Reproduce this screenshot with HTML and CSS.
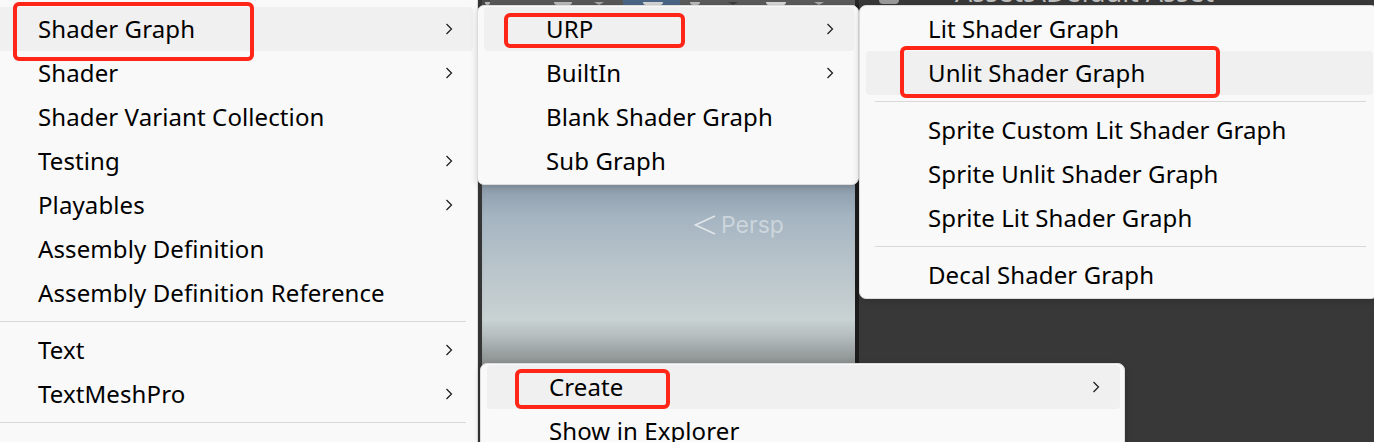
FILE: index.html
```html
<!DOCTYPE html>
<html>
<head>
<meta charset="utf-8">
<link rel="stylesheet" href="styles.css">
</head>
<body>
<div class="screen">
  <div class="app">
    <div class="toolbar">
      <div class="tb-seg tb-a"><span class="tb-bit"></span></div>
      <div class="tb-seg tb-b"><span class="tb-bit tb-v"></span><span class="tb-tri"></span></div>
      <div class="tb-seg tb-blue"><span class="tb-bit tb-wide"></span></div>
      <div class="tb-seg tb-c"><span class="tb-bit"></span><span class="tb-tri dark"></span><span class="tb-bit tb-wide"></span><span class="tb-tri"></span></div>
      <div class="tb-seg tb-edge"></div>
      <div class="tb-seg tb-dark"><span class="tb-circle"></span><span class="tb-path">Assets\Default Asset</span></div>
    </div>
    <div class="pane-left"></div>
    <div class="scene">
      <div class="persp">
        <svg width="22" height="22" viewBox="0 0 22 22"><path d="M21 2 L1.5 11 L21 20" fill="none" stroke="#eef1f3" stroke-width="1.7"/></svg>
        <span>Persp</span>
      </div>
    </div>
    <div class="scene-edge"></div>
    <div class="pane-right"></div>
  </div>

  <div class="menu menu-main">
    <div class="row hover"><span>Shader Graph</span><svg class="chev" width="8" height="12" viewBox="0 0 8 12"><path d="M1.5 1 L6.5 6 L1.5 11"/></svg></div>
    <div class="row"><span>Shader</span><svg class="chev" width="8" height="12" viewBox="0 0 8 12"><path d="M1.5 1 L6.5 6 L1.5 11"/></svg></div>
    <div class="row"><span>Shader Variant Collection</span></div>
    <div class="row"><span>Testing</span><svg class="chev" width="8" height="12" viewBox="0 0 8 12"><path d="M1.5 1 L6.5 6 L1.5 11"/></svg></div>
    <div class="row"><span>Playables</span><svg class="chev" width="8" height="12" viewBox="0 0 8 12"><path d="M1.5 1 L6.5 6 L1.5 11"/></svg></div>
    <div class="row"><span>Assembly Definition</span></div>
    <div class="row"><span>Assembly Definition Reference</span></div>
    <div class="sep"></div>
    <div class="row"><span>Text</span><svg class="chev" width="8" height="12" viewBox="0 0 8 12"><path d="M1.5 1 L6.5 6 L1.5 11"/></svg></div>
    <div class="row"><span>TextMeshPro</span><svg class="chev" width="8" height="12" viewBox="0 0 8 12"><path d="M1.5 1 L6.5 6 L1.5 11"/></svg></div>
    <div class="sep"></div>
    <div class="row"><span>Search</span></div>
  </div>

  <div class="menu menu-sub">
    <div class="row hover"><span>URP</span><svg class="chev" width="8" height="12" viewBox="0 0 8 12"><path d="M1.5 1 L6.5 6 L1.5 11"/></svg></div>
    <div class="row"><span>BuiltIn</span><svg class="chev" width="8" height="12" viewBox="0 0 8 12"><path d="M1.5 1 L6.5 6 L1.5 11"/></svg></div>
    <div class="row"><span>Blank Shader Graph</span></div>
    <div class="row"><span>Sub Graph</span></div>
  </div>

  <div class="menu menu-urp">
    <div class="row"><span>Lit Shader Graph</span></div>
    <div class="row hover"><span>Unlit Shader Graph</span></div>
    <div class="sep"></div>
    <div class="row"><span>Sprite Custom Lit Shader Graph</span></div>
    <div class="row"><span>Sprite Unlit Shader Graph</span></div>
    <div class="row"><span>Sprite Lit Shader Graph</span></div>
    <div class="sep"></div>
    <div class="row"><span>Decal Shader Graph</span></div>
  </div>

  <div class="menu menu-ctx">
    <div class="row hover"><span>Create</span><svg class="chev" width="8" height="12" viewBox="0 0 8 12"><path d="M1.5 1 L6.5 6 L1.5 11"/></svg></div>
    <div class="row"><span>Show in Explorer</span></div>
  </div>

  <div class="mark mark-shader"></div>
  <div class="mark mark-urp"></div>
  <div class="mark mark-unlit"></div>
  <div class="mark mark-create"></div>
</div>
</body>
</html>
```

FILE: styles.css
```css
* { box-sizing: border-box; }
html, body { margin: 0; padding: 0; }
body { width: 1374px; height: 442px; overflow: hidden; background: #383838; }

.screen {
  position: relative;
  width: 1374px;
  height: 442px;
  overflow: hidden;
  font-family: "Noto Sans", "Liberation Sans", sans-serif;
}

/* background editor */
.app {
  display: grid;
  grid-template-columns: 482px 373px 4px 1fr;
  grid-template-rows: 5px 1fr;
  height: 442px;
  background: #383838;
}
.toolbar {
  grid-column: 2 / 5;
  grid-row: 1;
  display: flex;
  overflow: hidden;
}
.tb-seg { height: 5px; display: flex; align-items: flex-end; overflow: hidden; }
.tb-a { width: 8px; background: #4b4b4b; padding-left: 3px; }
.tb-b { width: 133px; background: #585858; gap: 22px; padding-left: 64px; }
.tb-blue { width: 57px; background: #4a6585; padding-left: 20px; }
.tb-c { width: 175px; background: #5a5a5a; gap: 28px; padding-left: 10px; }
.tb-edge { width: 4px; background: #262626; }
.tb-dark { flex: 1; background: #383838; position: relative; padding-left: 20px; gap: 56px; }
.tb-bit { width: 10px; height: 3px; background: #b9b9b9; border-radius: 0 0 4px 4px; }
.tb-v { width: 18px; }
.tb-wide { width: 20px; background: #d6d6d6; }
.tb-tri { width: 10px; height: 3px; background: #a9a9a9; clip-path: polygon(0 0, 100% 0, 50% 100%); }
.tb-tri.dark { background: #3c3c3c; }
.tb-circle { width: 20px; height: 4px; background: #9a9a9a; border-radius: 0 0 10px 10px; align-self: flex-start; }
.tb-path {
  font-size: 27px;
  line-height: 27px;
  color: #bdbdbd;
  margin-top: -22px;
  align-self: flex-start;
  white-space: nowrap;
}
.pane-left { grid-column: 1; grid-row: 2; background: #383838; }
.scene {
  grid-column: 2;
  grid-row: 2;
  position: relative;
  background: linear-gradient(180deg,
    #7f8fa0 0%,
    #8b9aa9 50%,
    #a4b4c1 59%,
    #b7c3ca 72%,
    #c3cdd0 83%,
    #c9d3d4 88%,
    #b6bebf 92.5%,
    #8d9292 100%) 0 0 / 100% 357px no-repeat, #8d9292;
}
.scene-edge { grid-column: 3; grid-row: 2; background: #1c1c1c; }
.pane-right { grid-column: 4; grid-row: 2; background: #383838; }

.persp {
  position: absolute;
  left: 212px;
  top: 206px;
  display: flex;
  align-items: center;
  gap: 5px;
  color: rgba(236, 240, 243, 0.55);
  font-family: "Inter", "Noto Sans", sans-serif;
  font-size: 23px;
  line-height: 28px;
}
.persp svg { opacity: 0.8; }

/* menus */
.menu {
  position: absolute;
  background: #f9f9f9;
  border: 1px solid #dcdcdc;
  border-radius: 7px;
  box-shadow: 0 2px 7px rgba(0, 0, 0, 0.16);
  padding: 1px 0;
  font-size: 24px;
  letter-spacing: 0.1px;
  color: #000;
}
.row {
  height: 44px;
  margin: 0 4px 0 6px;
  padding: 0 20px 0 62px;
  border-radius: 4px;
  display: flex;
  align-items: center;
  justify-content: space-between;
  white-space: nowrap;
}
.row span { line-height: 44px; }
.row.hover { background: #f0f0f0; }
.chev path { fill: none; stroke: #1f1f1f; stroke-width: 1.25; }
.sep {
  height: 13px;
  margin: 0 11px 0 15px;
  display: flex;
  align-items: center;
}
.sep::before { content: ""; flex: 1; height: 1px; background: #d9d9d9; }

.menu-main { left: -31px; top: -10px; width: 509px; padding-top: 16px; border-radius: 0 7px 7px 0; }
.menu-sub { left: 477px; top: 5px; width: 382px; }
.menu-urp { left: 859px; top: 5px; width: 519px; }
.menu-ctx { left: 480px; top: 363px; width: 645px; }

/* annotation marks */
.mark {
  position: absolute;
  border: 4px solid #ff2517;
  border-radius: 6px;
}
.mark-shader { left: 13px; top: 2px; width: 241px; height: 59px; }
.mark-urp { left: 504px; top: 13px; width: 181px; height: 35px; }
.mark-unlit { left: 900px; top: 46px; width: 320px; height: 52px; }
.mark-create { left: 515px; top: 369px; width: 155px; height: 40px; }
```
